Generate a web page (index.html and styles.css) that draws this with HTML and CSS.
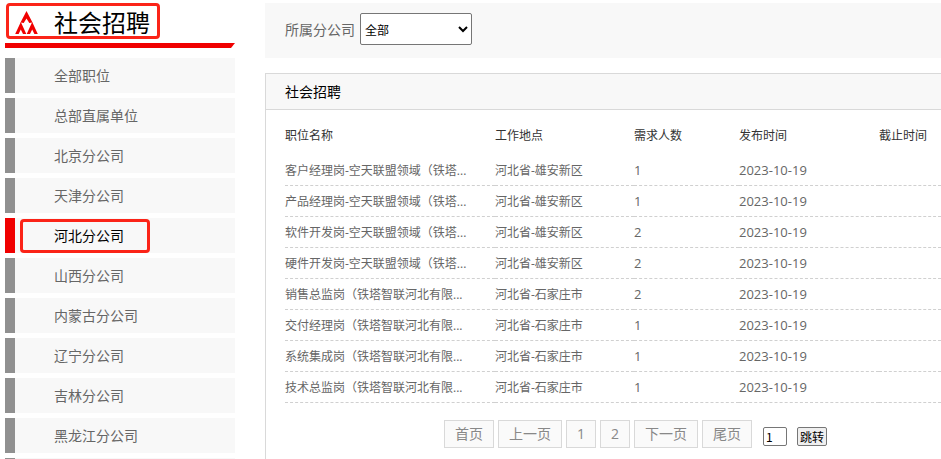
FILE: index.html
```html
<!DOCTYPE html>
<html lang="zh-CN">
<head>
  <meta charset="UTF-8">
  <meta name="viewport" content="width=device-width, initial-scale=1.0">
  <title>社会招聘</title>
  <link rel="stylesheet" href="styles.css">
</head>
<body>
  <div class="page">
    <aside class="sidebar">
      <h1 class="side-title">
        <svg class="logo" viewBox="0 0 24 24" width="24" height="24" aria-hidden="true">
          <path fill="#f00000" d="M11.500 0 L17.500 11.500 L14.300 12 L11.500 7.500 L8.700 12 L5.500 11.500 Z"/>
          <path fill="#f00000" d="M5.800 11 L11.300 23 L8 23 L5.800 18.500 L3.600 23 L0.200 23 Z"/>
          <path fill="#f00000" d="M17.200 11 L22.800 23 L19.400 23 L17.200 18.500 L15 23 L11.700 23 Z"/>
        </svg>
        <span>社会招聘</span>
      </h1>
      <div class="side-line"></div>
      <ul class="side-list">
        <li><a href="#">全部职位</a></li>
        <li><a href="#">总部直属单位</a></li>
        <li><a href="#">北京分公司</a></li>
        <li><a href="#">天津分公司</a></li>
        <li class="active"><a href="#">河北分公司</a></li>
        <li><a href="#">山西分公司</a></li>
        <li><a href="#">内蒙古分公司</a></li>
        <li><a href="#">辽宁分公司</a></li>
        <li><a href="#">吉林分公司</a></li>
        <li><a href="#">黑龙江分公司</a></li>
        <li></li>
      </ul>
    </aside>

    <main class="content">
      <form class="filter">
        <label for="company">所属分公司</label>
        <select id="company">
          <option>全部</option>
        </select>
      </form>

      <section class="panel">
        <h2>社会招聘</h2>
        <table class="jobs">
          <thead>
            <tr>
              <th class="col-name">职位名称</th>
              <th class="col-place">工作地点</th>
              <th class="col-count">需求人数</th>
              <th class="col-date">发布时间</th>
              <th>截止时间</th>
            </tr>
          </thead>
          <tbody>
            <tr><td>客户经理岗-空天联盟领域（铁塔...</td><td>河北省-雄安新区</td><td class="num">1</td><td class="num">2023-10-19</td><td></td></tr>
            <tr><td>产品经理岗-空天联盟领域（铁塔...</td><td>河北省-雄安新区</td><td class="num">1</td><td class="num">2023-10-19</td><td></td></tr>
            <tr><td>软件开发岗-空天联盟领域（铁塔...</td><td>河北省-雄安新区</td><td class="num">2</td><td class="num">2023-10-19</td><td></td></tr>
            <tr><td>硬件开发岗-空天联盟领域（铁塔...</td><td>河北省-雄安新区</td><td class="num">2</td><td class="num">2023-10-19</td><td></td></tr>
            <tr><td>销售总监岗（铁塔智联河北有限...</td><td>河北省-石家庄市</td><td class="num">2</td><td class="num">2023-10-19</td><td></td></tr>
            <tr><td>交付经理岗（铁塔智联河北有限...</td><td>河北省-石家庄市</td><td class="num">1</td><td class="num">2023-10-19</td><td></td></tr>
            <tr><td>系统集成岗（铁塔智联河北有限...</td><td>河北省-石家庄市</td><td class="num">1</td><td class="num">2023-10-19</td><td></td></tr>
            <tr><td>技术总监岗（铁塔智联河北有限...</td><td>河北省-石家庄市</td><td class="num">1</td><td class="num">2023-10-19</td><td></td></tr>
          </tbody>
        </table>

        <div class="pager">
          <a href="#">首页</a>
          <a href="#">上一页</a>
          <a href="#">1</a>
          <a href="#">2</a>
          <a href="#">下一页</a>
          <a href="#">尾页</a>
          <form class="jump">
            <input type="text" value="1" aria-label="页码">
            <button type="button">跳转</button>
          </form>
        </div>
      </section>
    </main>
  </div>
</body>
</html>
```

FILE: styles.css
```css
*,
*::after {
  box-sizing: border-box;
}
body {
  margin: 0;
  height: 100vh;
  overflow: hidden;
  background: #fff;
  color: #666;
  font: 12px/18px "Open Sans", "Noto Sans CJK SC", sans-serif;
}
a {
  color: inherit;
  text-decoration: none;
}
.page {
  display: flex;
  gap: 30px;
  padding: 3px 0 0 5px;
}

/* left menu */
.sidebar {
  flex: 0 0 230px;
}
.side-title {
  position: relative;
  display: flex;
  align-items: center;
  gap: 15px;
  height: 40px;
  margin: 0;
  padding-left: 10px;
  color: #000;
  font-size: 24px;
  font-weight: normal;
}
.side-title::after,
.side-list .active::after {
  content: "";
  position: absolute;
  border: 3px solid #fb2418;
  border-radius: 4px;
}
.side-title::after {
  left: 1px;
  top: 0;
  width: 154px;
  height: 36px;
}
.side-line {
  height: 5px;
  background: #f00000;
  clip-path: polygon(0 0, 100% 0, calc(100% - 4px) 100%, 0 100%);
}
.side-list {
  display: flex;
  flex-direction: column;
  gap: 5px;
  margin: 10px 0 0;
  padding: 0;
  list-style: none;
  font-size: 14px;
}
.side-list li {
  position: relative;
  min-height: 35px;
  border-left: 10px solid #909090;
  background: #f8f8f8;
}
.side-list a {
  display: block;
  padding-left: 39px;
  line-height: 35px;
}
.side-list .active {
  border-left-color: #f00000;
  color: #000;
}
.side-list .active::after {
  left: 5px;
  top: 1px;
  width: 130px;
  height: 34px;
}

/* right side */
.content {
  display: flex;
  flex: 1;
  flex-direction: column;
  min-width: 0;
}
.filter {
  display: flex;
  align-items: center;
  gap: 5px;
  padding: 10px 20px 13px;
  background: #f8f8f8;
  font-size: 14px;
}
.filter label {
  padding-top: 2px;
}
.filter select {
  width: 112px;
  height: 32px;
  border: 1px solid #767676;
  border-radius: 2px;
  background: #fff;
  color: #000;
  font: 12px "Noto Sans CJK SC", sans-serif;
}
.panel {
  flex: 1;
  margin-top: 15px;
  border: 1px solid #d9d9d9;
  border-width: 1px 0 0 1px;
}
.panel h2 {
  margin: 0;
  padding-left: 19px;
  border-bottom: 1px solid #d9d9d9;
  background: #f8f8f8;
  color: #000;
  font-size: 14px;
  font-weight: normal;
  line-height: 35px;
}
.jobs {
  width: calc(100% - 19px);
  margin: 5px 0 0 19px;
  border-collapse: separate;
  border-spacing: 0;
  table-layout: fixed;
}
.jobs th {
  height: 40px;
  padding: 2px 0 0;
  color: #333;
  font-weight: normal;
  text-align: left;
}
.jobs td {
  height: 31px;
  padding: 2px 0 0;
  border-bottom: 1px dashed #d0d0d0;
  white-space: nowrap;
}
.jobs .num {
  padding: 0;
  font-size: 13px;
}
.col-name {
  width: 210px;
}
.col-place {
  width: 139px;
}
.col-count {
  width: 105px;
}
.col-date {
  width: 140px;
}

/* pagination */
.pager {
  display: flex;
  gap: 4px;
  margin: 17px 0 20px 178px;
  color: #888;
  font-size: 14px;
}
.pager a {
  padding: 0 10px;
  border: 1px solid #d9d9d9;
  background: #fafafa;
  line-height: 26px;
}
.jump {
  display: flex;
  align-items: flex-end;
  gap: 10px;
  margin-left: 7px;
  padding-bottom: 2px;
}
.jump input,
.jump button {
  height: 19px;
  border: 1px solid #767676;
  border-radius: 2px;
  color: #000;
  font: 12px/17px "Noto Sans CJK SC", sans-serif;
}
.jump input {
  width: 24px;
  padding: 0 2px;
}
.jump button {
  width: 30px;
  padding: 0;
  background: #efefef;
}
```
